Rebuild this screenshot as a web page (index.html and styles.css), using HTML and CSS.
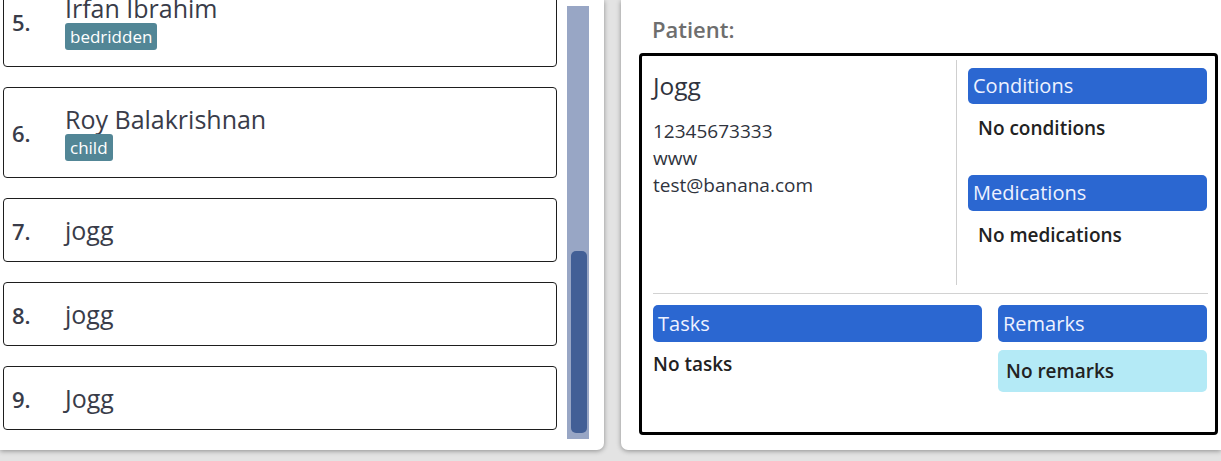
FILE: index.html
```html
<!DOCTYPE html>
<html>
<head>
<meta charset="utf-8">
<link rel="stylesheet" href="styles.css">
</head>
<body>
<div class="app">
  <div class="panel left-panel">
    <div class="list">
      <div class="list-inner">
        <div class="card">
          <div class="idx">5.</div>
          <div class="info">
            <div class="name">Irfan Ibrahim</div>
            <div class="tags"><span class="tag">bedridden</span></div>
          </div>
        </div>
        <div class="card">
          <div class="idx">6.</div>
          <div class="info">
            <div class="name">Roy Balakrishnan</div>
            <div class="tags"><span class="tag">child</span></div>
          </div>
        </div>
        <div class="card">
          <div class="idx">7.</div>
          <div class="info"><div class="name">jogg</div></div>
        </div>
        <div class="card">
          <div class="idx">8.</div>
          <div class="info"><div class="name">jogg</div></div>
        </div>
        <div class="card">
          <div class="idx">9.</div>
          <div class="info"><div class="name">Jogg</div></div>
        </div>
      </div>
    </div>
    <div class="track"><div class="thumb"></div></div>
  </div>
  <div class="panel right-panel">
    <div class="patient-label">Patient:</div>
    <div class="detail">
      <div class="top">
        <div class="contact">
          <div class="pname">Jogg</div>
          <div class="line">12345673333</div>
          <div class="line">www</div>
          <div class="line">test@banana.com</div>
        </div>
        <div class="vdivider"></div>
        <div class="side">
          <div class="section">
            <div class="header">Conditions</div>
            <div class="body">No conditions</div>
          </div>
          <div class="section">
            <div class="header">Medications</div>
            <div class="body">No medications</div>
          </div>
        </div>
      </div>
      <div class="hdivider"></div>
      <div class="bottom">
        <div class="bsection">
          <div class="header tall">Tasks</div>
          <div class="bbody">No tasks</div>
        </div>
        <div class="bsection">
          <div class="header tall">Remarks</div>
          <div class="remarks">No remarks</div>
        </div>
      </div>
    </div>
  </div>
</div>
</body>
</html>
```

FILE: styles.css
```css
* { box-sizing: border-box; }
html, body { margin: 0; padding: 0; }
body {
  width: 1221px;
  height: 461px;
  overflow: hidden;
  background: #e3e3e3;
  font-family: "Open Sans", "Noto Sans", sans-serif;
}
.app {
  display: flex;
  gap: 17px;
  height: 450px;
}
.panel {
  background: #fff;
  height: 450px;
  box-shadow: 0 1px 5px rgba(0,0,0,0.38);
}
.left-panel {
  width: 604px;
  border-bottom-right-radius: 7px;
  display: flex;
}
.list {
  flex: 1;
  overflow: hidden;
  padding-left: 3px;
}
.list-inner {
  margin-top: -24px;
  display: flex;
  flex-direction: column;
  gap: 20px;
}
.card {
  border: 1.5px solid #1e1e1e;
  border-radius: 4px;
  padding: 16px 8px;
  display: flex;
  align-items: center;
  color: #393c49;
}
.idx {
  width: 53px;
  font-size: 22px;
  font-weight: 600;
  line-height: 27px;
  padding-top: 2px;
}
.info { display: flex; flex-direction: column; }
.name {
  font-size: 25px;
  font-weight: 500;
  line-height: 30px;
}
.tags { display: flex; }
.tag {
  background: #528696;
  color: #fff;
  font-size: 17px;
  font-weight: 500;
  line-height: 27px;
  height: 27px;
  padding: 0 5px;
  border-radius: 3px;
}
.track {
  width: 22px;
  margin: 6px 15px 11px 10px;
  background: #98a6c5;
  display: flex;
  flex-direction: column;
  justify-content: flex-end;
  padding: 0 2px 6px 4px;
}
.thumb {
  height: 182px;
  background: #425f96;
  border-radius: 5px;
}
.right-panel {
  width: 600px;
  border-bottom-left-radius: 7px;
  padding: 15px 3px 0 18px;
}
.patient-label {
  padding-left: 13px;
  font-size: 22px;
  font-weight: 600;
  color: #6e6e6e;
  line-height: 29px;
  margin-bottom: 9px;
}
.detail {
  border: 3px solid #000;
  border-radius: 4px;
  height: 382px;
  padding: 4px 7px 0 11px;
  color: #2f333d;
}
.top {
  display: flex;
  height: 225px;
}
.contact {
  flex: 1;
  padding-top: 9px;
}
.pname {
  font-size: 24.5px;
  font-weight: 500;
  line-height: 33px;
  margin-bottom: 16px;
}
.line {
  font-size: 19px;
  font-weight: 500;
  line-height: 27px;
}
.vdivider {
  width: 1px;
  background: #cfcfcf;
}
.side {
  width: 239px;
  margin-left: 11px;
  margin-right: 1px;
  padding-top: 8px;
}
.header {
  background: #2b67d1;
  color: #eef2ff;
  font-size: 20px;
  font-weight: 500;
  height: 36px;
  line-height: 36px;
  padding-left: 5px;
  border-radius: 5px;
}
.header.tall { height: 37px; line-height: 37px; }
.section { margin-bottom: 34px; }
.body {
  padding: 11px 10px 0;
  font-size: 19px;
  font-weight: 600;
  line-height: 26px;
  color: #222;
}
.hdivider {
  height: 1px;
  background: #d2d2d2;
  margin-top: 8px;
}
.bottom {
  margin-top: 11px;
  display: grid;
  grid-template-columns: 329px 209px;
  gap: 16px;
}
.bbody {
  padding-top: 9px;
  font-size: 19px;
  font-weight: 600;
  line-height: 26px;
  color: #222;
}
.remarks {
  margin-top: 8px;
  background: #b4eaf6;
  border-radius: 5px;
  height: 42px;
  line-height: 42px;
  padding-left: 8px;
  font-size: 19px;
  font-weight: 600;
  color: #222;
}
```
